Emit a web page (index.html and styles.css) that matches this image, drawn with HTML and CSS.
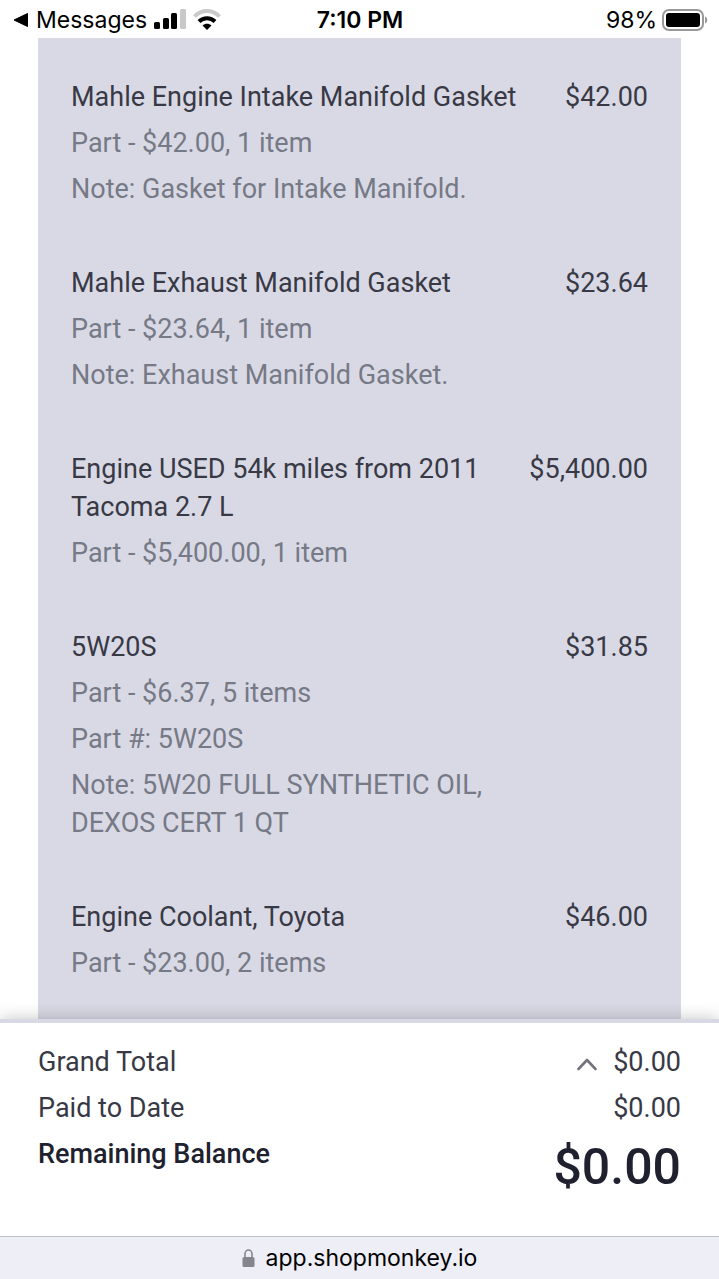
FILE: index.html
```html
<!DOCTYPE html>
<html lang="en">
<head>
<meta charset="utf-8">
<meta name="viewport" content="width=device-width, initial-scale=1">
<title>Estimate</title>
<link rel="stylesheet" href="styles.css">
</head>
<body>
<header class="status">
  <div class="status-left">
    <a class="back" href="#">
      <svg width="16" height="16" viewBox="0 0 16 16" aria-hidden="true"><path d="M2 8 15.500 1.500V14.500Z" fill="#000" stroke="#000" stroke-linejoin="round"/></svg>
      <span>Messages</span>
    </a>
    <svg width="32" height="22" viewBox="0 0 32 22" role="img" aria-label="Signal"><rect y="13" width="6" height="7" rx="1.500"/><rect x="9" y="9" width="6" height="11" rx="1.500"/><rect x="17" y="4" width="6" height="16" rx="1.500"/><rect x="26" y="0" width="6" height="20" rx="1.500" fill="#c8c8c8"/></svg>
    <svg class="wifi" width="28" height="22" viewBox="0 0 28 22" role="img" aria-label="Wi-Fi"><path d="M1.500 7.500C8.500 0 19.500 0 26.500 7.500" fill="none" stroke="#cacaca" stroke-width="4"/><path d="M6 12.500C10.500 8 17.500 8 22 12.500" fill="none" stroke="#000" stroke-width="4"/><path d="M9.500 16.500C12 14 16 14 18.500 16.500L14 21Z"/></svg>
  </div>
  <div class="clock">7:10 PM</div>
  <div class="battery">
    <span>98%</span>
    <svg width="46" height="22" viewBox="0 0 46 22" role="img" aria-label="Battery"><rect x="1" y="1" width="40" height="20" rx="6" fill="none" stroke="#999" stroke-width="2"/><rect x="4" y="4" width="34" height="14" rx="3"/><path d="M43 7.500C46 8.500 46 13.500 43 14.500Z" fill="#999"/></svg>
  </div>
</header>

<main class="content">
  <ul class="items">
    <li class="item">
      <div class="details"><h2 class="name">Mahle Engine Intake Manifold Gasket</h2><p>Part - $42.00, 1 item</p><p>Note: Gasket for Intake Manifold.</p></div>
      <span class="price">$42.00</span>
    </li>
    <li class="item">
      <div class="details"><h2 class="name">Mahle Exhaust Manifold Gasket</h2><p>Part - $23.64, 1 item</p><p>Note: Exhaust Manifold Gasket.</p></div>
      <span class="price">$23.64</span>
    </li>
    <li class="item">
      <div class="details"><h2 class="name">Engine USED 54k miles from 2011 Tacoma 2.7 L</h2><p>Part - $5,400.00, 1 item</p></div>
      <span class="price">$5,400.00</span>
    </li>
    <li class="item">
      <div class="details"><h2 class="name">5W20S</h2><p>Part - $6.37, 5 items</p><p>Part #: 5W20S</p><p>Note: 5W20 FULL SYNTHETIC OIL, DEXOS CERT 1 QT</p></div>
      <span class="price">$31.85</span>
    </li>
    <li class="item">
      <div class="details"><h2 class="name">Engine Coolant, Toyota</h2><p>Part - $23.00, 2 items</p></div>
      <span class="price">$46.00</span>
    </li>
  </ul>
</main>

<section class="totals">
  <div class="row">
    <span>Grand Total</span>
    <span class="amount">
      <button class="toggle" type="button" aria-label="Show breakdown"><svg width="20" height="14" viewBox="0 0 20 14" aria-hidden="true"><path d="M1.500 12 10 3 18.500 12" fill="none" stroke="#73747f" stroke-width="2.600" stroke-linejoin="round" stroke-linecap="round"/></svg></button>
      <span>$0.00</span>
    </span>
  </div>
  <div class="row"><span>Paid to Date</span><span>$0.00</span></div>
  <div class="row balance"><span>Remaining Balance</span><span class="due">$0.00</span></div>
</section>

<footer class="address">
  <svg width="13" height="18" viewBox="0 0 13 18" aria-hidden="true"><path d="M3 9V5a3.500 4 0 0 1 7 0V9" fill="none" stroke="#85858d" stroke-width="1.600"/><rect x="0.500" y="8" width="12" height="10" rx="1.500" fill="#85858d"/></svg>
  <span>app.shopmonkey.io</span>
</footer>
</body>
</html>
```
FILE: styles.css
```css
* {
  box-sizing: border-box;
}

body {
  margin: 0;
  height: 100vh;
  display: flex;
  flex-direction: column;
  background: #fff;
  color: #383945;
  font: 27px/38px Roboto, sans-serif;
}

h2,
p,
ul {
  margin: 0;
  padding: 0;
}

.status {
  flex: none;
  display: grid;
  grid-template-columns: 1fr auto 1fr;
  align-items: center;
  height: 38px;
  padding: 2px 11px 0 12px;
  color: #000;
  font: 23px/36px Inter, sans-serif;
}

.status-left,
.back,
.battery {
  display: flex;
  align-items: center;
  gap: 8px;
}

.status-left {
  gap: 7px;
}

.back {
  color: inherit;
  text-decoration: none;
}

.clock {
  font-weight: 600;
}

.battery {
  justify-content: flex-end;
  gap: 5px;
}

.content {
  flex: 1;
  min-height: 0;
  overflow: hidden;
  padding: 0 38px;
}

.items {
  display: flex;
  flex-direction: column;
  gap: 56px;
  min-height: 100%;
  padding: 40px 33px;
  background: #d9d9e5;
  list-style: none;
}

.item {
  display: flex;
  justify-content: space-between;
  gap: 32px;
}

.details {
  display: flex;
  flex-direction: column;
  gap: 8px;
  color: #767986;
}

.name {
  color: #383945;
  font: inherit;
}

.totals {
  flex: none;
  position: relative;
  display: flex;
  flex-direction: column;
  gap: 8px;
  height: 217px;
  padding: 20px 38px 0;
  border-top: 4px solid #d9d9e5;
  background: #fff;
  box-shadow: 0 0 16px rgba(0, 0, 0, 0.24);
}

.row {
  display: flex;
  justify-content: space-between;
}

.amount {
  display: flex;
  align-items: center;
  gap: 16px;
}

.toggle {
  display: flex;
  padding: 4px 0 0;
  border: 0;
  background: none;
}

.balance {
  color: #20212f;
  font-weight: 500;
}

.due {
  font-size: 50px;
  line-height: 64px;
}

.address {
  flex: none;
  position: relative;
  display: flex;
  align-items: center;
  justify-content: center;
  gap: 11px;
  height: 43px;
  border-top: 1px solid #bfbfc6;
  background: #eeeef7;
  color: #000;
  font: 23px/42px Inter, sans-serif;
}
```
